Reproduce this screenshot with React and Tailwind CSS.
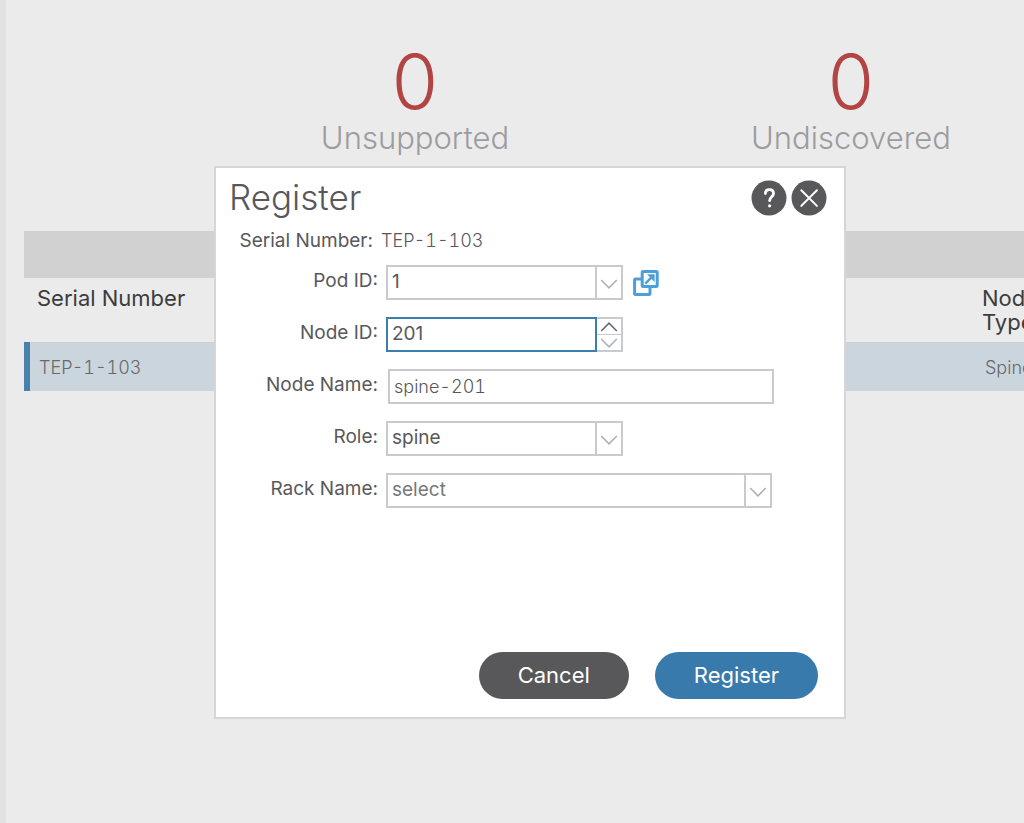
import React, { useState } from "react";

function Stat({ value, label }) {
  return (
    <div className="flex w-[436px] shrink-0 flex-col items-center">
      <span className="text-[75px] leading-[76px] font-light text-[#b24444]">{value}</span>
      <span className="text-[31px] leading-9 font-light text-[#9c9c9f]">{label}</span>
    </div>
  );
}

function Chevron({ up = false }) {
  return (
    <svg
      viewBox="0 0 18 10"
      className="h-[10px] w-[18px]"
      fill="none"
      stroke="currentColor"
      strokeWidth="1.6"
      aria-hidden="true"
    >
      <path d={up ? "M1.2 9 9 1.2 16.8 9" : "M1.2 1 9 8.8 16.8 1"} />
    </svg>
  );
}

function Row({ id, label, children }) {
  return (
    <div className="flex items-center gap-2">
      <label htmlFor={id} className="w-[162px] shrink-0 pb-[3px] text-right text-[19px] leading-6 text-[#58585b]">
        {label}
      </label>
      {children}
    </div>
  );
}

function Select({ id, options, className }) {
  return (
    <div className={`relative ${className}`}>
      <select
        id={id}
        className="h-[35px] w-full appearance-none border-2 border-[#c9cacd] bg-white pr-8 pl-1 text-[19px] outline-none"
      >
        {options.map((o) => (
          <option key={o}>{o}</option>
        ))}
      </select>
      <span className="pointer-events-none absolute inset-y-0 right-0 flex w-7 items-center justify-center border-x-2 border-l-[#c9cacd] border-r-transparent pt-[2px] text-[#b0b0b3]">
        <Chevron />
      </span>
    </div>
  );
}

function RegisterDialog() {
  const [nodeId, setNodeId] = useState(201);
  return (
    <form
      role="dialog"
      aria-labelledby="dialog-title"
      onSubmit={(e) => e.preventDefault()}
      className="flex min-h-[553px] w-[632px] flex-col border-2 border-[#d6d6d6] bg-white"
    >
      <header className="flex items-start justify-between pt-[9px] pr-[17px] pl-[13px]">
        <h2 id="dialog-title" className="text-[35px] leading-10 font-light text-[#58585b]">
          Register
        </h2>
        <div className="flex gap-1 pt-[3px]">
          <button type="button" aria-label="Help" className="size-9 rounded-full">
            <svg viewBox="0 0 36 36" className="size-9" fill="none">
              <circle cx="18" cy="18" r="17.5" fill="#58585b" />
              <path
                d="M14.4 13.6c0-2.5 1.7-3.9 4-3.9s4.1 1.4 4.1 3.8c0 3.1-3.9 3.4-3.9 7.2"
                stroke="#fff"
                strokeWidth="2.8"
                strokeLinecap="round"
              />
              <circle cx="18.6" cy="25.8" r="1.6" fill="#fff" />
            </svg>
          </button>
          <button type="button" aria-label="Close" className="size-9 rounded-full">
            <svg viewBox="0 0 36 36" className="size-9" fill="none">
              <circle cx="18" cy="18" r="17.5" fill="#58585b" />
              <path d="M10.3 10.3l15.6 15.6M25.9 10.3L10.3 25.9" stroke="#fff" strokeWidth="2" strokeLinecap="round" />
            </svg>
          </button>
        </div>
      </header>

      <div className="flex gap-2 pt-[12px] text-[19px] leading-6 text-[#58585b]">
        <span className="w-[157px] shrink-0 text-right">Serial Number:</span>
        <span className="text-[18px] font-light tabular-nums">TEP-1-103</span>
      </div>

      <div className="flex flex-col gap-[17px] pt-[12px] text-[#58585b]">
        <Row id="pod" label="Pod ID:">
          <Select id="pod" options={["1"]} className="w-[237px]" />
          <button type="button" aria-label="Open pod" className="ml-[2px] size-[26px] text-[#4c9fd9]">
            <svg viewBox="0 0 26 26" className="size-[26px]" fill="none" stroke="currentColor">
              <path d="M8 9H2.6a1 1 0 0 0-1 1v13.4a1 1 0 0 0 1 1H16a1 1 0 0 0 1-1V18" strokeWidth="3" />
              <rect x="9.2" y="1.5" width="15" height="15" rx="1" strokeWidth="3" fill="#fff" />
              <path d="M12.2 13.6l7-7" strokeWidth="2.4" />
              <path d="M14 4.3h7.6v7.6z" fill="currentColor" stroke="none" />
            </svg>
          </button>
        </Row>

        <Row id="node" label="Node ID:">
          <div className="flex h-[35px] w-[237px]">
            <input
              id="node"
              type="text"
              inputMode="numeric"
              value={nodeId}
              onChange={(e) => setNodeId(Number(e.target.value) || 0)}
              className="min-w-0 flex-1 border-2 border-[#3a7ead] bg-white pl-1 text-[19px] outline-none"
            />
            <div className="flex w-[26px] flex-col border-y-2 border-r-2 border-[#c9cacd]">
              <button
                type="button"
                aria-label="Increase"
                onClick={() => setNodeId(nodeId + 1)}
                className="flex flex-1 items-center justify-center border-b border-[#c9cacd] text-[#6a6a6d]"
              >
                <Chevron up />
              </button>
              <button
                type="button"
                aria-label="Decrease"
                onClick={() => setNodeId(nodeId - 1)}
                className="flex flex-1 items-center justify-center text-[#b0b0b3]"
              >
                <Chevron />
              </button>
            </div>
          </div>
        </Row>

        <Row id="name" label="Node Name:">
          <input
            id="name"
            type="text"
            defaultValue="spine-201"
            className="ml-[2px] h-[35px] w-[386px] border-2 border-[#c9cacd] bg-white pl-1 text-[18px] font-light tabular-nums outline-none"
          />
        </Row>

        <Row id="role" label="Role:">
          <Select id="role" options={["spine"]} className="w-[237px]" />
        </Row>

        <Row id="rack" label="Rack Name:">
          <Select id="rack" options={["select"]} className="w-[386px] text-[#77777a]" />
        </Row>
      </div>

      <footer className="mt-auto flex justify-end gap-[26px] pr-[26px] pb-[18px] text-[22px] text-white">
        <button type="button" className="h-[47px] rounded-full bg-[#58585b] px-[39px]">
          Cancel
        </button>
        <button type="submit" className="h-[47px] rounded-full bg-[#387aab] px-[39px]">
          Register
        </button>
      </footer>
    </form>
  );
}

export default function App() {
  return (
    <div className="relative min-h-screen overflow-hidden border-l-[6px] border-[#e1e1e1] bg-[#ebebeb] font-['Inter','Liberation_Sans',sans-serif]">
      <section className="flex pt-[44px] pl-[191px]">
        <Stat value="0" label="Unsupported" />
        <Stat value="0" label="Undiscovered" />
      </section>

      <main className="mt-[75px] ml-[18px] w-[1080px]">
        <div className="h-[47px] bg-[#d1d1d1]" />
        <table className="w-full table-fixed border-collapse text-left">
          <colgroup>
            <col className="w-[945px]" />
            <col />
          </colgroup>
          <thead>
            <tr className="h-16 align-top text-[22px] leading-6 text-[#3c3c3e]">
              <th scope="col" className="px-[10px] pt-2 font-normal">Serial Number</th>
              <th scope="col" className="px-[10px] pt-2 font-normal">Node<br />Type</th>
            </tr>
          </thead>
          <tbody>
            <tr className="h-[49px] border-t border-[#cfcfcf] bg-[#cbd5dd] text-[18px] font-light text-[#68686b] tabular-nums">
              <td className="border-l-[6px] border-l-[#4a81a8] pt-px pl-[9px]">TEP-1-103</td>
              <td className="pt-px pl-[13px]">Spine</td>
            </tr>
          </tbody>
        </table>
      </main>

      <div className="absolute inset-0 flex items-center justify-center pt-[62px] pl-[30px]">
        <RegisterDialog />
      </div>
    </div>
  );
}
